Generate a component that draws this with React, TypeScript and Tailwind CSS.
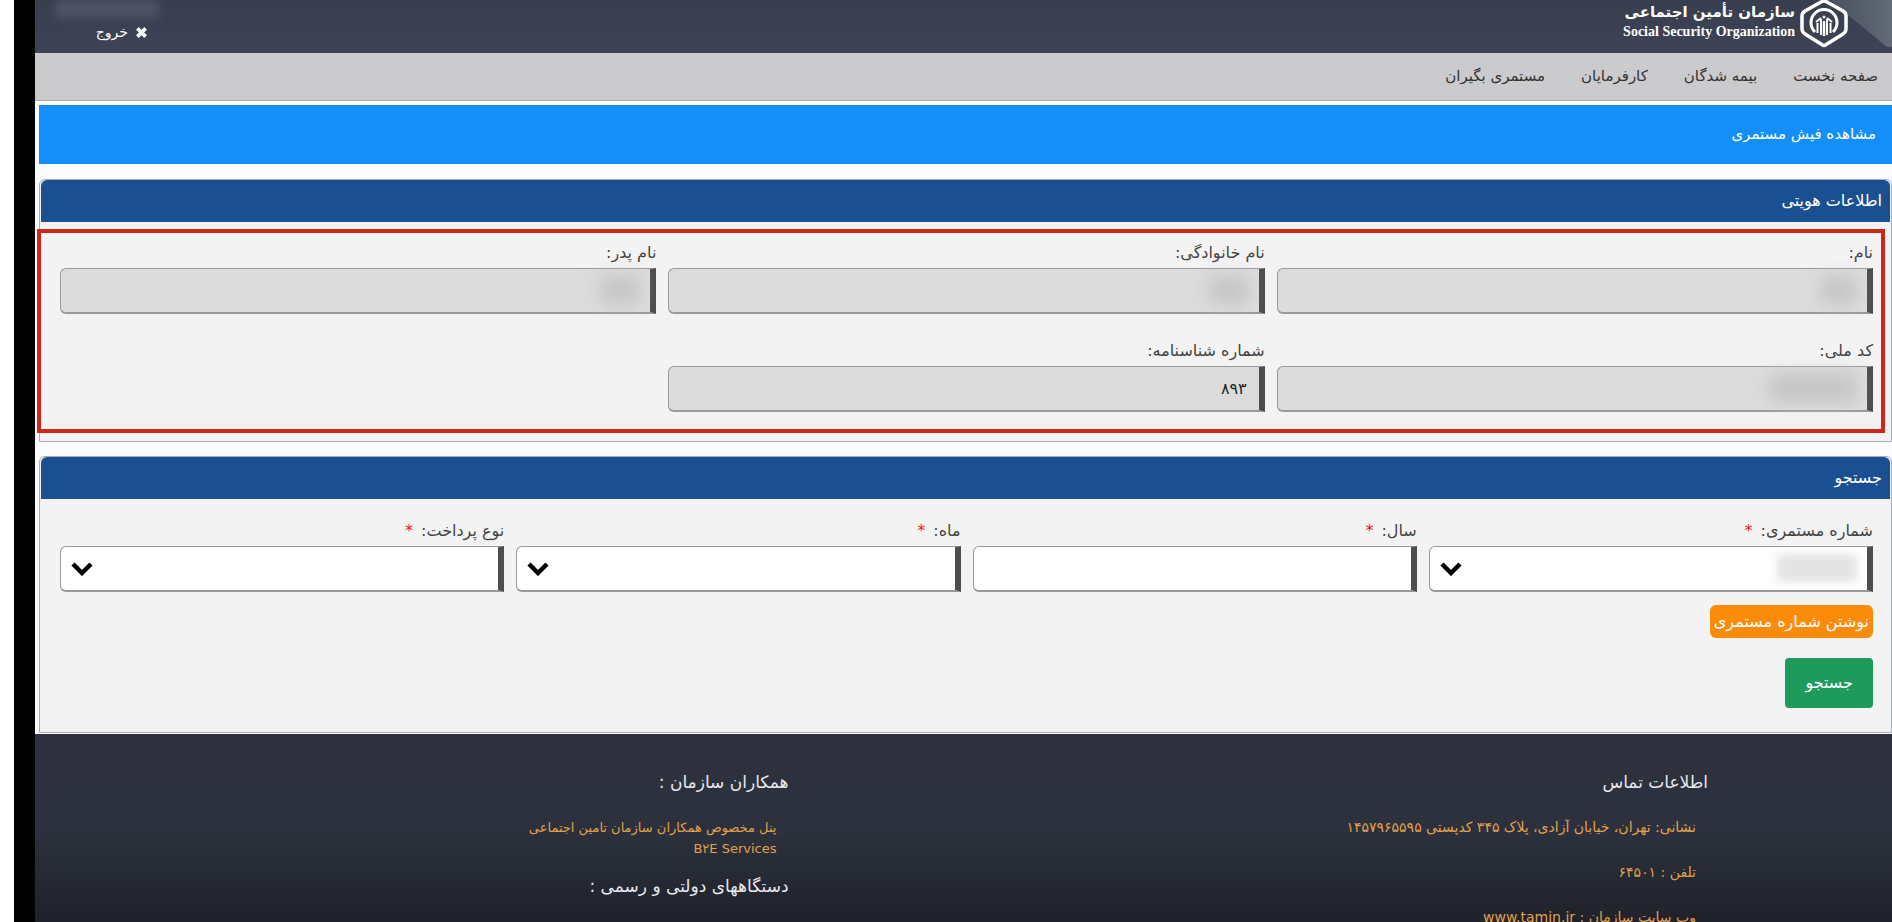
import React, { FC } from "react";

const navItems = ["صفحه نخست", "بیمه شدگان", "کارفرمایان", "مستمری بگیران"];

const Logo: FC = () => (
	<svg viewBox="0 0 50 50" className="h-[50px] w-[50px] shrink-0" fill="none" stroke="white" aria-hidden="true">
		<path d="M22 2 Q25 0 28 2 L44 11 Q47 13 47 16 V29 Q47 32 44 34 L28 44 Q25 47 22 44 L6 34 Q3 32 3 29 V16 Q3 13 6 11 Z" strokeWidth="3.5" strokeLinejoin="round" />
		<path d="M16 32 A13 13 0 1 1 34 32" strokeWidth="3" />
		<path d="M18.500 33 V23 M22 35 V19 M28 35 V19 M31.500 33 V23" strokeWidth="2" />
		<path d="M25 36 V21" strokeWidth="2.5" />
		<path d="M17 22 L22 18 M33 22 L28 18" strokeWidth="2" />
		<circle cx="25" cy="17" r="1.500" fill="white" stroke="none" />
	</svg>
);

const Header: FC = () => (
	<header className="relative flex h-[53px] shrink-0 items-start justify-between overflow-hidden bg-linear-to-b from-[#373e4e] to-[#3e4456] pr-[43px]">
		{/* folded corner behind the logo */}
		<svg viewBox="0 0 62 48" className="absolute top-0 right-0 h-12 w-[62px]" aria-hidden="true">
			<defs>
				<linearGradient id="corner" x1="0" x2="1">
					<stop offset="0" stopColor="#4a5160" />
					<stop offset="1" stopColor="#626a78" />
				</linearGradient>
			</defs>
			<path d="M0 0 H62 V47 H57 Z" fill="url(#corner)" />
		</svg>
		<div className="relative flex items-start gap-1">
			<Logo />
			<div className="flex flex-col items-start text-white">
				<span className="h-6 text-[15px] leading-6 font-bold">سازمان تأمین اجتماعی</span>
				<span dir="ltr" className="font-['Liberation_Serif',serif] text-[14px] leading-4 font-bold">Social Security Organization</span>
			</div>
		</div>
		<div className="ml-5 flex w-[104px] flex-col items-start">
			<div className="h-[18px] w-full bg-[#4d5464] blur-xs" />
			<button type="button" className="mt-1 mr-3 flex items-center gap-2 text-[14px] leading-5 text-white">
				<svg viewBox="0 0 12 12" className="h-[11px] w-[11px]" stroke="white" strokeWidth="4" aria-hidden="true">
					<path d="M1.500 1.500 L10.500 10.500 M10.500 1.500 L1.500 10.500" />
				</svg>
				خروج
			</button>
		</div>
	</header>
);

type FieldProps = {
	id: string,
	label: string,
	value?: string,
	select?: boolean,
	required?: boolean,
	readOnly?: boolean,
	mask?: string,
}

const Field: FC<FieldProps> = ({ id, label, value, select, required, readOnly, mask }: FieldProps) => {
	const box = "block h-[46px] w-full appearance-none rounded-l-md border border-r-[6px] border-b-2 border-[#9a9a9a] border-r-[#4d4d4d] px-3 text-[16px] text-[#222]";

	return (
		<div>
			<label htmlFor={id} className="flex h-[31px] items-center gap-2 text-[16px] leading-5 text-[#444]">
				{label}
				{required && <span className="text-[#e02020]">*</span>}
			</label>
			<div className="relative">
				{select
					? <select id={id} className={`${box} bg-white`}><option></option></select>
					: <input id={id} type="text" readOnly={readOnly} defaultValue={value} className={`${box} ${readOnly ? "bg-[#dcdcdc]" : "bg-white"}`} />
				}
				{select && (
					<svg viewBox="0 0 22 14" className="pointer-events-none absolute top-4 left-[11px] h-[14px] w-[22px]" fill="none" stroke="black" strokeWidth="4.500" aria-hidden="true">
						<path d="M2 2 L11 11 L20 2" />
					</svg>
				)}
				{mask && <div className={`pointer-events-none absolute top-2 right-4 h-7 ${mask}`} />}
			</div>
		</div>
	)
}

type PanelProps = {
	title: string,
	className?: string,
	children: React.ReactNode,
}

const Panel: FC<PanelProps> = ({ title, className, children }: PanelProps) => (
	<section className={`relative rounded-t-md border border-[#a9adb8] bg-[#f3f3f3] ${className}`}>
		<h2 className="mr-px ml-px flex h-[42px] items-center rounded-t-md bg-[#1a5091] px-2 text-[16px] text-white">{title}</h2>
		{children}
	</section>
);

const Footer: FC = () => (
	<footer className="grid flex-1 grid-cols-2 bg-linear-to-b from-[#2f303e] via-[#2c313d] to-[#1e2129] pt-8 text-[#e3a14c]">
		<div className="pr-[184px]">
			<h3 className="text-[17px] leading-8 text-[#e8e9ee]">اطلاعات تماس</h3>
			<div className="pr-3 text-[14px] leading-[21px]">
				<p className="mt-[19px]">نشانی: تهران، خیابان آزادی، پلاک ۳۴۵ کدپستی ۱۴۵۷۹۶۵۵۹۵</p>
				<p className="mt-6">تلفن : ۶۴۵۰۱</p>
				<p className="mt-6">وب سایت سازمان : <a href="#">www.tamin.ir</a></p>
			</div>
		</div>
		<div className="pr-[175px]">
			<h3 className="text-[17px] leading-8 text-[#e8e9ee]">همکاران سازمان :</h3>
			<div className="mt-[19px] flex flex-col items-start pr-3 text-[13px] leading-[21px]">
				<a href="#">پنل مخصوص همکاران سازمان تامین اجتماعی</a>
				<a href="#" dir="ltr">B۲E Services</a>
			</div>
			<h3 className="mt-[11px] text-[17px] leading-8 text-[#e8e9ee]">دستگاههای دولتی و رسمی :</h3>
		</div>
	</footer>
);

export default function App() {
	return (
		<div className="flex h-screen overflow-hidden bg-white pl-[14px] font-['DejaVu_Sans','Noto_Sans',sans-serif]">
			<div className="w-[21px] shrink-0 bg-black" />
			<div dir="rtl" className="flex min-w-0 flex-1 flex-col">
				<Header />
				<nav className="flex h-12 shrink-0 items-center gap-9 border-b border-[#aaa] bg-[#cbcacc] px-[14px] text-[15px] text-[#333]">
					{navItems.map((item) => <a key={item} href="#">{item}</a>)}
				</nav>

				<main className="shrink-0 bg-[#fbfbfd] pt-1 pb-px pl-1">
					<h1 className="flex h-[59px] items-center bg-[#148ff9] px-4 text-[15px] text-white">مشاهده فیش مستمری</h1>

					<Panel title="اطلاعات هویتی" className="mt-[15px]">
						<div className="grid grid-cols-3 gap-x-3 gap-y-[21px] pt-[15px] pr-[18px] pb-[29px] pl-5">
							<Field id="name" label="نام:" readOnly mask="w-9 bg-[#c6c6c6] blur-sm" />
							<Field id="family" label="نام خانوادگی:" readOnly mask="w-10 bg-[#c6c6c6] blur-sm" />
							<Field id="father" label="نام پدر:" readOnly mask="w-10 bg-[#c6c6c6] blur-sm" />
							<Field id="nationalCode" label="کد ملی:" readOnly mask="w-22 bg-[#c6c6c6] blur-sm" />
							<Field id="certNumber" label="شماره شناسنامه:" value="۸۹۳" readOnly />
						</div>
						{/* highlight frame over the identity fields */}
						<div className="pointer-events-none absolute top-[49px] right-[6px] bottom-2 -left-[3px] border-4 border-[#d0261a]" />
					</Panel>

					<Panel title="جستجو" className="mt-[14px]">
						<form className="pt-4 pr-[18px] pb-6 pl-5">
							<div className="grid grid-cols-4 gap-x-3">
								<Field id="pensionNumber" label="شماره مستمری:" select required mask="w-20 bg-[#e4e4e4] blur-xs" />
								<Field id="year" label="سال:" required />
								<Field id="month" label="ماه:" select required />
								<Field id="payType" label="نوع پرداخت:" select required />
							</div>
							<button type="button" className="mt-[13px] block h-[33px] rounded-md bg-[#fb8c0b] px-1 text-[16px] text-white">نوشتن شماره مستمری</button>
							<button type="button" className="mt-5 block h-[50px] rounded-sm bg-[#1d9a5c] px-5 text-[16px] text-white">جستجو</button>
						</form>
					</Panel>
				</main>

				<Footer />
			</div>
		</div>
	);
}
